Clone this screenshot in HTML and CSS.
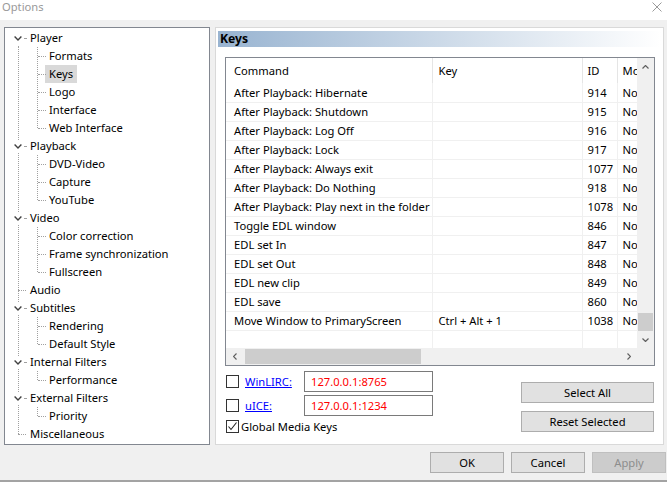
FILE: index.html
```html
<!DOCTYPE html>
<html lang="en">
<head>
    <meta charset="UTF-8">
    <title>Options</title>
    <link rel="stylesheet" href="styles.css">
</head>
<body>
<div class="titlebar">
    <span class="title">Options</span>
    <svg class="close" width="10" height="10" viewBox="0 0 10 10"><path d="M0.5 0.5L9.5 9.5M9.5 0.5L0.5 9.5" stroke="#9a9a9a" stroke-width="1" fill="none"/></svg>
</div>
<div class="dialog">
    <div class="main">
        <div class="tree">
            <ul class="roots">
                <li class="node">
                    <div class="row"><span class="exp"><svg width="8" height="5" viewBox="0 0 8 5"><polyline points="0.6,0.6 4,4 7.4,0.6" fill="none" stroke="#404040" stroke-width="1.4"/></svg></span><span class="label">Player</span></div>
                    <ul class="kids">
                        <li><div class="row"><span class="label">Formats</span></div></li>
                        <li><div class="row"><span class="label selected">Keys</span></div></li>
                        <li><div class="row"><span class="label">Logo</span></div></li>
                        <li><div class="row"><span class="label">Interface</span></div></li>
                        <li><div class="row"><span class="label">Web Interface</span></div></li>
                    </ul>
                </li>
                <li class="node">
                    <div class="row"><span class="exp"><svg width="8" height="5" viewBox="0 0 8 5"><polyline points="0.6,0.6 4,4 7.4,0.6" fill="none" stroke="#404040" stroke-width="1.4"/></svg></span><span class="label">Playback</span></div>
                    <ul class="kids">
                        <li><div class="row"><span class="label">DVD-Video</span></div></li>
                        <li><div class="row"><span class="label">Capture</span></div></li>
                        <li><div class="row"><span class="label">YouTube</span></div></li>
                    </ul>
                </li>
                <li class="node">
                    <div class="row"><span class="exp"><svg width="8" height="5" viewBox="0 0 8 5"><polyline points="0.6,0.6 4,4 7.4,0.6" fill="none" stroke="#404040" stroke-width="1.4"/></svg></span><span class="label">Video</span></div>
                    <ul class="kids">
                        <li><div class="row"><span class="label">Color correction</span></div></li>
                        <li><div class="row"><span class="label">Frame synchronization</span></div></li>
                        <li><div class="row"><span class="label">Fullscreen</span></div></li>
                    </ul>
                </li>
                <li class="node leaf">
                    <div class="row"><span class="label">Audio</span></div>
                </li>
                <li class="node">
                    <div class="row"><span class="exp"><svg width="8" height="5" viewBox="0 0 8 5"><polyline points="0.6,0.6 4,4 7.4,0.6" fill="none" stroke="#404040" stroke-width="1.4"/></svg></span><span class="label">Subtitles</span></div>
                    <ul class="kids">
                        <li><div class="row"><span class="label">Rendering</span></div></li>
                        <li><div class="row"><span class="label">Default Style</span></div></li>
                    </ul>
                </li>
                <li class="node">
                    <div class="row"><span class="exp"><svg width="8" height="5" viewBox="0 0 8 5"><polyline points="0.6,0.6 4,4 7.4,0.6" fill="none" stroke="#404040" stroke-width="1.4"/></svg></span><span class="label">Internal Filters</span></div>
                    <ul class="kids">
                        <li><div class="row"><span class="label">Performance</span></div></li>
                    </ul>
                </li>
                <li class="node">
                    <div class="row"><span class="exp"><svg width="8" height="5" viewBox="0 0 8 5"><polyline points="0.6,0.6 4,4 7.4,0.6" fill="none" stroke="#404040" stroke-width="1.4"/></svg></span><span class="label">External Filters</span></div>
                    <ul class="kids">
                        <li><div class="row"><span class="label">Priority</span></div></li>
                    </ul>
                </li>
                <li class="node leaf">
                    <div class="row"><span class="label">Miscellaneous</span></div>
                </li>
            </ul>
        </div>

        <div class="panel">
            <div class="panel-title">Keys</div>
            <div class="list">
                <div class="grid-view">
                    <table class="keys">
                        <colgroup><col class="w-cmd"><col class="w-key"><col class="w-id"><col class="w-mod"></colgroup>
                        <thead>
                            <tr><th class="c-cmd">Command</th><th class="c-key">Key</th><th class="c-id">ID</th><th class="c-mod">Mouse Windowed</th></tr>
                        </thead>
                        <tbody>
                            <tr><td class="c-cmd">After Playback: Hibernate</td><td class="c-key"></td><td class="c-id">914</td><td class="c-mod">None</td></tr>
                            <tr><td class="c-cmd">After Playback: Shutdown</td><td class="c-key"></td><td class="c-id">915</td><td class="c-mod">None</td></tr>
                            <tr><td class="c-cmd">After Playback: Log Off</td><td class="c-key"></td><td class="c-id">916</td><td class="c-mod">None</td></tr>
                            <tr><td class="c-cmd">After Playback: Lock</td><td class="c-key"></td><td class="c-id">917</td><td class="c-mod">None</td></tr>
                            <tr><td class="c-cmd">After Playback: Always exit</td><td class="c-key"></td><td class="c-id">1077</td><td class="c-mod">None</td></tr>
                            <tr><td class="c-cmd">After Playback: Do Nothing</td><td class="c-key"></td><td class="c-id">918</td><td class="c-mod">None</td></tr>
                            <tr><td class="c-cmd">After Playback: Play next in the folder</td><td class="c-key"></td><td class="c-id">1078</td><td class="c-mod">None</td></tr>
                            <tr><td class="c-cmd">Toggle EDL window</td><td class="c-key"></td><td class="c-id">846</td><td class="c-mod">None</td></tr>
                            <tr><td class="c-cmd">EDL set In</td><td class="c-key"></td><td class="c-id">847</td><td class="c-mod">None</td></tr>
                            <tr><td class="c-cmd">EDL set Out</td><td class="c-key"></td><td class="c-id">848</td><td class="c-mod">None</td></tr>
                            <tr><td class="c-cmd">EDL new clip</td><td class="c-key"></td><td class="c-id">849</td><td class="c-mod">None</td></tr>
                            <tr><td class="c-cmd">EDL save</td><td class="c-key"></td><td class="c-id">860</td><td class="c-mod">None</td></tr>
                            <tr><td class="c-cmd">Move Window to PrimaryScreen</td><td class="c-key">Ctrl + Alt + 1</td><td class="c-id">1038</td><td class="c-mod">None</td></tr>
                            <tr><td class="c-cmd"></td><td class="c-key"></td><td class="c-id"></td><td class="c-mod"></td></tr>
                        </tbody>
                    </table>
                </div>
                <div class="vscroll">
                    <span class="arrow"><svg width="7" height="4" viewBox="0 0 7 4"><polyline points="0.5,3.5 3.5,0.5 6.5,3.5" fill="none" stroke="#606060" stroke-width="1.2"/></svg></span>
                    <span class="track v"><span class="thumb"></span></span>
                    <span class="arrow"><svg width="7" height="4" viewBox="0 0 7 4"><polyline points="0.5,0.5 3.5,3.5 6.5,0.5" fill="none" stroke="#606060" stroke-width="1.2"/></svg></span>
                </div>
                <div class="hscroll">
                    <span class="arrow"><svg width="4" height="7" viewBox="0 0 4 7"><polyline points="3.5,0.5 0.5,3.5 3.5,6.5" fill="none" stroke="#606060" stroke-width="1.2"/></svg></span>
                    <span class="track h"><span class="thumb"></span></span>
                    <span class="arrow"><svg width="4" height="7" viewBox="0 0 4 7"><polyline points="0.5,0.5 3.5,3.5 0.5,6.5" fill="none" stroke="#606060" stroke-width="1.2"/></svg></span>
                </div>
                <div class="corner"></div>
            </div>

            <div class="bottom">
                <div class="opts">
                    <div class="opt">
                        <span class="check"></span>
                        <a class="link" href="javascript:;">WinLIRC:</a>
                        <span class="field">127.0.0.1:8765</span>
                    </div>
                    <div class="opt">
                        <span class="check"></span>
                        <a class="link" href="javascript:;">uICE:</a>
                        <span class="field">127.0.0.1:1234</span>
                    </div>
                    <div class="opt small">
                        <span class="check"><svg width="11" height="11" viewBox="0 0 11 11"><polyline points="1.5,5.5 4,8.5 9.5,1.5" fill="none" stroke="#222" stroke-width="1.1"/></svg></span>
                        <span class="opt-text">Global Media Keys</span>
                    </div>
                </div>
                <div class="actions">
                    <button class="btn">Select All</button>
                    <button class="btn">Reset Selected</button>
                </div>
            </div>
        </div>
    </div>

    <div class="footer">
        <button class="btn">OK</button>
        <button class="btn">Cancel</button>
        <button class="btn disabled">Apply</button>
    </div>
</div>
</body>
</html>
```

FILE: styles.css
```css
*{
    margin: 0;
    padding: 0;
    box-sizing: border-box;
}
html,body{
    width: 667px;
    height: 482px;
    overflow: hidden;
    background: #fff;
    font: 11.2px "Noto Sans", sans-serif;
    color: #000;
}
ul{
    list-style: none;
}

/* title bar */
.titlebar{
    height: 20px;
    display: flex;
    align-items: flex-start;
}
.title{
    padding-left: 2px;
    line-height: 14px;
    color: #999;
}
.close{
    margin: 2px 5px 0 auto;
}

/* dialog body */
.dialog{
    height: 462px;
    background: #f0f0f0;
    border-bottom: 2px solid #a3a3a3;
    padding: 7px 1px 0 4px;
}
.main{
    display: flex;
    height: 418px;
}

/* tree */
.tree{
    width: 206px;
    height: 418px;
    border: 1px solid #828790;
    background: #fff;
    padding-top: 1px;
}
.roots{
    position: relative;
}
.roots::before{
    content: "";
    position: absolute;
    left: 13px;
    top: 17px;
    bottom: 9px;
    border-left: 1px dotted #a0a0a0;
}
.kids{
    position: relative;
}
.kids::before{
    content: "";
    position: absolute;
    left: 32px;
    top: 0;
    bottom: 9px;
    border-left: 1px dotted #a0a0a0;
}
.row{
    position: relative;
    height: 18px;
    display: flex;
    align-items: center;
    white-space: nowrap;
}
.exp{
    position: relative;
    z-index: 1;
    width: 11px;
    height: 12px;
    margin-left: 7px;
    background: #fff;
    display: flex;
    align-items: center;
    justify-content: center;
}
.node > .row .label{
    margin-left: 3px;
}
.node > .row::after{
    content: "";
    position: absolute;
    left: 19px;
    width: 2px;
    top: 9px;
    border-top: 1px dotted #a0a0a0;
}
.leaf > .row .label{
    margin-left: 21px;
}
.leaf > .row::after{
    left: 13px;
    width: 8px;
}
.kids .row::before{
    content: "";
    position: absolute;
    left: 33px;
    width: 8px;
    top: 9px;
    border-top: 1px dotted #a0a0a0;
}
.kids .label{
    margin-left: 40px;
}
.label{
    line-height: 18px;
    padding: 0 4px;
}
.label.selected{
    background: #d9d9d9;
}

/* right panel */
.panel{
    width: 449px;
    height: 418px;
    margin-left: 5px;
    border: 1px solid #d9d9d9;
    background: #fff;
}
.panel-title{
    margin: 3px 2px 0 2px;
    height: 16px;
    line-height: 16px;
    padding-left: 2px;
    font-weight: bold;
    font-size: 12.2px;
    background: linear-gradient(to right, #99b4d1, #fff);
}

.list{
    margin: 10px 8px 0 9px;
    width: 430px;
    height: 309px;
    border: 1px solid #828790;
    display: grid;
    grid-template-columns: 411px 17px;
    grid-template-rows: 290px 17px;
}
.grid-view{
    overflow: hidden;
}
.keys{
    table-layout: fixed;
    border-collapse: collapse;
    width: 471px;
}
.w-cmd{ width: 206px; }
.w-key{ width: 150px; }
.w-id{ width: 35px; }
.w-mod{ width: 80px; }
.keys th{
    height: 25px;
    font-weight: normal;
    text-align: left;
    border-right: 1px solid #e5e5e5;
    white-space: nowrap;
    overflow: hidden;
}
.keys td{
    height: 19px;
    border-right: 1px solid #f0f0f0;
    border-bottom: 1px solid #f0f0f0;
    white-space: nowrap;
    overflow: hidden;
}
.keys th,.keys td{
    padding-left: 6px;
}
.keys .c-cmd{ padding-left: 8px; }
.keys .c-id,.keys .c-mod{ padding-left: 5px; }

/* scroll bars */
.vscroll,.hscroll{
    display: flex;
    background: #f0f0f0;
}
.vscroll{
    flex-direction: column;
}
.arrow{
    width: 17px;
    height: 17px;
    flex: none;
    display: flex;
    align-items: center;
    justify-content: center;
}
.track{
    flex: 1;
    display: flex;
}
.track.v{
    flex-direction: column;
    justify-content: flex-end;
}
.track.v .thumb{
    width: 15px;
    height: 18px;
    margin-left: 1px;
    background: #cdcdcd;
}
.track.h{
    align-items: center;
}
.track.h .thumb{
    margin-left: 2px;
    width: 176px;
    height: 15px;
    background: #cdcdcd;
}
.corner{
    background: #f0f0f0;
}

/* options under the list */
.bottom{
    display: flex;
    margin: 5px 9px 0 10px;
}
.opt{
    display: flex;
    align-items: center;
    height: 21px;
    margin-bottom: 3px;
}
.opt.small{
    height: 13px;
    margin-top: 4px;
}
.check{
    width: 13px;
    height: 13px;
    border: 1px solid #333;
    background: #fff;
    display: flex;
    align-items: center;
    justify-content: center;
}
.link{
    width: 59px;
    margin-left: 6px;
    color: #0000ff;
    text-decoration: underline;
}
.field{
    width: 129px;
    height: 21px;
    line-height: 19px;
    border: 1px solid #7a7a7a;
    padding-left: 6px;
    color: #ff0000;
    background: #fff;
}
.opt-text{
    margin-left: 2px;
}
.actions{
    margin-left: auto;
    padding-top: 11px;
    display: flex;
    flex-direction: column;
    gap: 8px;
}
.actions .btn{
    width: 133px;
}

.btn{
    height: 21px;
    border: 1px solid #adadad;
    background: #e1e1e1;
    font: 11.2px "Noto Sans", sans-serif;
    color: #000;
}

.footer{
    margin-top: 7px;
    display: flex;
    justify-content: flex-end;
    gap: 7px;
}
.footer .btn{
    width: 74px;
}
.btn.disabled{
    background: #cccccc;
    border-color: #bfbfbf;
    color: #8d8d8d;
}
```
